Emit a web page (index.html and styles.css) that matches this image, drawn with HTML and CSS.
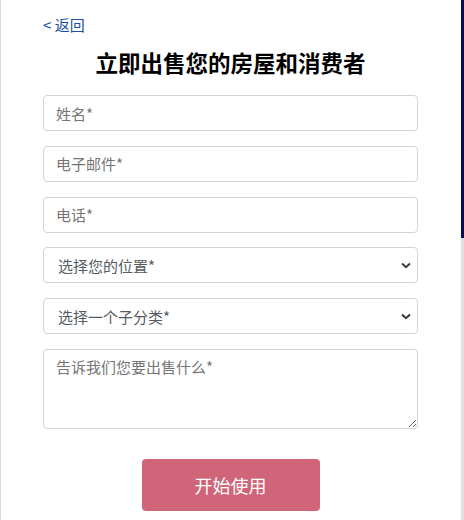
FILE: index.html
```html
<!DOCTYPE html>
<html>
<head>
    <title>立即出售您的房屋和消费者</title>
    <link rel="stylesheet" href="styles.css">
</head>
<body>
    <div class="frame">
        <div class="page">
            <a href="#" class="back-link">&lt; 返回</a>
            <h1>立即出售您的房屋和消费者</h1>
            <form class="sell-form">
                <input type="text" class="field" placeholder="姓名*">
                <input type="email" class="field" placeholder="电子邮件*">
                <input type="tel" class="field" placeholder="电话*">
                <div class="select-wrap">
                    <select class="field select">
                        <option>选择您的位置*</option>
                    </select>
                    <svg class="chevron" width="10" height="7" viewBox="0 0 10 7">
                        <path d="M1 1.5 L5 5.2 L9 1.5" fill="none" stroke="#343a40" stroke-width="2"/>
                    </svg>
                </div>
                <div class="select-wrap">
                    <select class="field select">
                        <option>选择一个子分类*</option>
                    </select>
                    <svg class="chevron" width="10" height="7" viewBox="0 0 10 7">
                        <path d="M1 1.5 L5 5.2 L9 1.5" fill="none" stroke="#343a40" stroke-width="2"/>
                    </svg>
                </div>
                <textarea class="field message" placeholder="告诉我们您要出售什么*"></textarea>
                <div class="actions">
                    <button type="button" class="start-btn">开始使用</button>
                </div>
            </form>
        </div>
        <div class="scroll-strip">
            <div class="scroll-thumb"></div>
        </div>
    </div>
</body>
</html>
```

FILE: styles.css
```css
body {
    margin: 0;
    font-family: "Noto Sans CJK SC", "Noto Sans", sans-serif;
    background-color: #fff;
    color: #212529;
}
.frame {
    display: flex;
    height: 520px;
    border-left: 1px solid #dcdcdc;
    box-sizing: border-box;
}
.page {
    flex: 1;
    padding: 15px 43px 0 42px;
}
.back-link {
    display: block;
    font-size: 15px;
    line-height: 20px;
    color: #1d4f9f;
    text-decoration: none;
}
h1 {
    margin: 12px 0 0;
    font-size: 22.5px;
    line-height: 30px;
    font-weight: 700;
    text-align: center;
    color: #000;
}
.sell-form {
    display: flex;
    flex-direction: column;
    gap: 14.8px;
    margin-top: 18px;
}
.field {
    display: block;
    width: 100%;
    height: 36px;
    box-sizing: border-box;
    padding: 0 12px;
    border: 1px solid #ced4da;
    border-radius: 4px;
    font-family: "Noto Sans CJK SC", "Noto Sans", sans-serif;
    font-size: 15px;
    color: #495057;
    background-color: #fff;
    outline: none;
}
.field::placeholder {
    color: #757575;
}
.select-wrap {
    position: relative;
}
.select {
    appearance: none;
    -webkit-appearance: none;
    padding-left: 14px;
    color: #555b61;
}
.chevron {
    position: absolute;
    right: 7px;
    top: 15px;
}
.message {
    height: 80px;
    padding-top: 6px;
    line-height: 22px;
    resize: vertical;
}
.actions {
    display: flex;
    justify-content: center;
    margin-top: 15px;
}
.start-btn {
    width: 178px;
    height: 52px;
    border: none;
    border-radius: 4px;
    background-color: #d06579;
    color: #fff;
    font-family: "Noto Sans CJK SC", "Noto Sans", sans-serif;
    font-size: 18px;
    cursor: pointer;
}
.scroll-strip {
    width: 3px;
    background-color: #e2e2e2;
}
.scroll-thumb {
    height: 238px;
    background-color: #0b0b5e;
}
```
